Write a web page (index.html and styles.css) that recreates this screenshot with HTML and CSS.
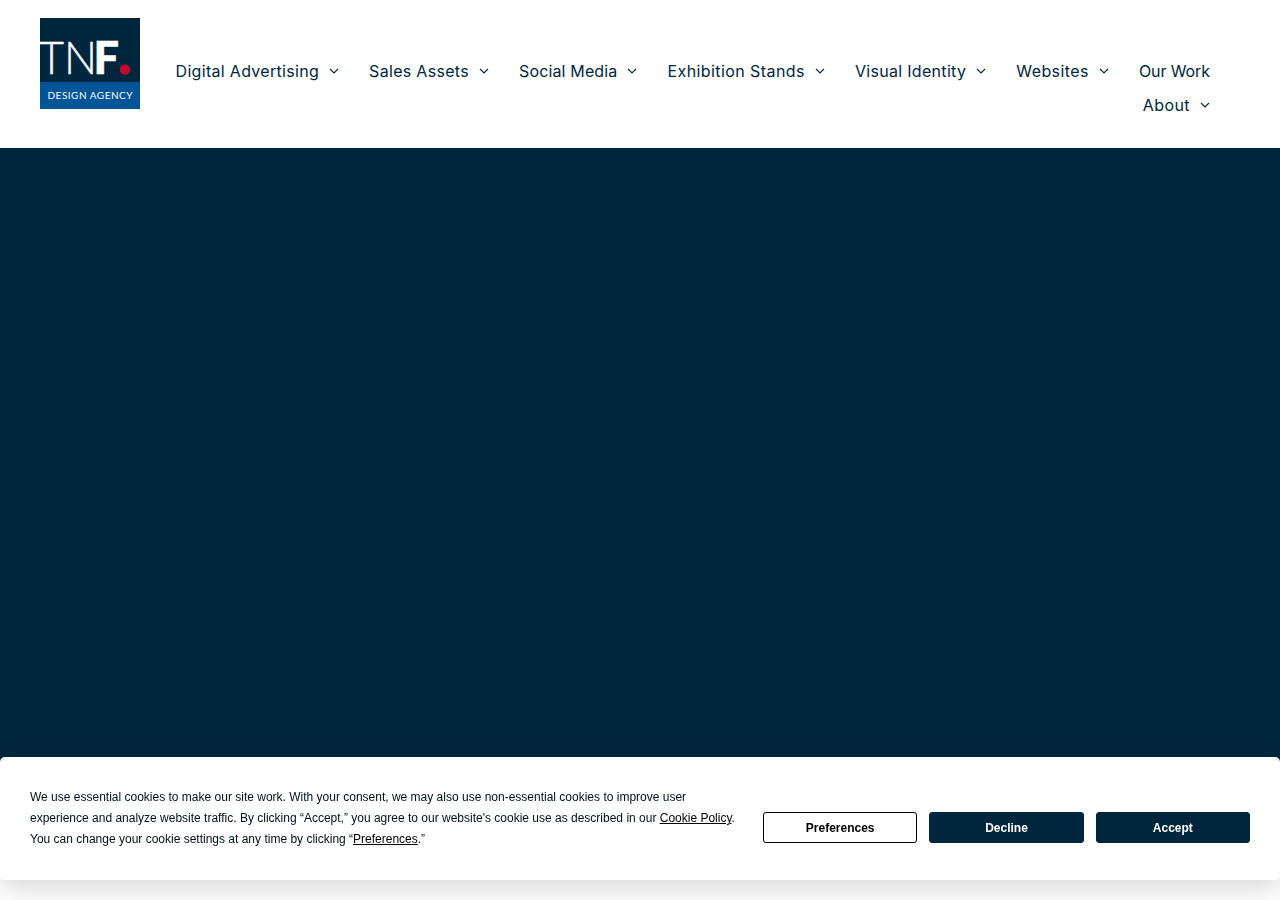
FILE: index.html
```html
<!DOCTYPE html>
<html lang="en">
<head>
  <meta charset="UTF-8">
  <title>TNF. Design Agency</title>
  <meta name="viewport" content="width=device-width, initial-scale=1">
  <link rel="stylesheet" href="styles.css">
</head>
<body>
  <svg class="sprite" width="0" height="0">
    <symbol id="chevron" viewBox="0 0 10 10"><path d="M1 3 L5 7 L9 3" fill="none" stroke="currentColor" stroke-width="1.1"/></symbol>
  </svg>

  <header class="header">
    <a class="logo" href="#">
      <svg width="100" height="91" viewBox="0 0 100 91">
        <rect width="100" height="91" fill="#00263e"/>
        <rect y="64" width="100" height="27" fill="#005596"/>
        <g fill="#fff">
          <text class="logo-thin" x="-1" y="56" textLength="25" lengthAdjust="spacingAndGlyphs">T</text>
          <text class="logo-thin" x="24" y="56" textLength="33" lengthAdjust="spacingAndGlyphs">N</text>
          <text class="logo-bold" x="53.5" y="56" textLength="25.5" lengthAdjust="spacingAndGlyphs">F</text>
          <text class="logo-sub" x="7.5" y="81" textLength="85">DESIGN AGENCY</text>
        </g>
        <circle cx="85" cy="51.5" r="5.3" fill="#ba0c2f"/>
      </svg>
    </a>
    <nav class="nav">
      <a class="nav-item" href="#"><span>Digital Advertising</span><svg class="chevron"><use href="#chevron"/></svg></a>
      <a class="nav-item" href="#"><span>Sales Assets</span><svg class="chevron"><use href="#chevron"/></svg></a>
      <a class="nav-item nav-tight" href="#"><span>Social Media</span><svg class="chevron"><use href="#chevron"/></svg></a>
      <a class="nav-item nav-wide" href="#"><span>Exhibition Stands</span><svg class="chevron"><use href="#chevron"/></svg></a>
      <a class="nav-item" href="#"><span>Visual Identity</span><svg class="chevron"><use href="#chevron"/></svg></a>
      <a class="nav-item nav-wide" href="#"><span>Websites</span><svg class="chevron"><use href="#chevron"/></svg></a>
      <a class="nav-item nav-plain" href="#"><span>Our Work</span></a>
      <a class="nav-item nav-wide" href="#"><span>About</span><svg class="chevron"><use href="#chevron"/></svg></a>
    </nav>
  </header>

  <main class="hero"></main>

  <div class="cookie-banner">
    <p class="cookie-text">We use essential cookies to make our site work. With your consent, we may also use non-essential cookies to improve user experience and analyze website traffic. By clicking “Accept,” you agree to our website's cookie use as described in our <a href="#">Cookie Policy</a>. You can change your cookie settings at any time by clicking “<a href="#">Preferences</a>.”</p>
    <div class="cookie-buttons">
      <button class="btn btn-outline">Preferences</button>
      <button class="btn">Decline</button>
      <button class="btn">Accept</button>
    </div>
  </div>
</body>
</html>
```
FILE: styles.css
```css
* {
  box-sizing: border-box;
}
body {
  margin: 0;
  height: 900px;
  overflow: hidden;
  background: #fff;
  font-family: "Liberation Sans", Arial, sans-serif;
}
.sprite {
  position: absolute;
}
.header {
  display: flex;
  justify-content: space-between;
  height: 148px;
  padding: 18px 70px 0 40px;
}
.logo svg {
  display: block;
}
.logo-thin {
  font: 300 46px Lato, sans-serif;
  stroke: #fff;
  stroke-width: 0.4px;
}
.logo-bold {
  font: 900 46px Lato, sans-serif;
  stroke: #fff;
  stroke-width: 0.5px;
}
.logo-sub {
  font: 400 10px Lato, sans-serif;
}
.nav {
  display: flex;
  flex-wrap: wrap;
  justify-content: flex-end;
  align-content: flex-start;
  column-gap: 30px;
  width: 1050px;
  padding-top: 36px;
}
.nav-item {
  display: flex;
  align-items: center;
  height: 34px;
  color: #00263e;
  font-family: Inter, sans-serif;
  font-size: 16px;
  font-weight: 370;
  letter-spacing: 0.31px;
  text-decoration: none;
  white-space: nowrap;
}
.nav-wide {
  letter-spacing: 0.42px;
}
.nav-tight {
  letter-spacing: 0.15px;
}
.nav-plain {
  letter-spacing: -0.09px;
}
.chevron {
  width: 10px;
  height: 10px;
  margin-left: 10px;
}
.hero {
  height: 700px;
  background: #00263e;
}
.cookie-banner {
  position: fixed;
  left: 0;
  right: 0;
  bottom: 20px;
  display: flex;
  align-items: center;
  justify-content: space-between;
  height: 123px;
  padding: 0 30px;
  background: #fff;
  border-radius: 5px;
  box-shadow: 0 8px 28px rgba(0, 0, 0, 0.16);
}
.cookie-text {
  width: 709px;
  margin: 0;
  color: #000f19;
  font-size: 12px;
  line-height: 21px;
}
.cookie-text a {
  color: #000;
}
.cookie-buttons {
  display: flex;
  gap: 12px;
  width: 487px;
  padding-top: 18px;
}
.btn {
  flex: 1;
  height: 31px;
  padding: 0;
  border: 1px solid #00263e;
  border-radius: 3px;
  background: #00263e;
  color: #fff;
  font-family: inherit;
  font-size: 12px;
  font-weight: bold;
}
.btn-outline {
  background: #fff;
  border-color: #000;
  color: #000;
}
```
